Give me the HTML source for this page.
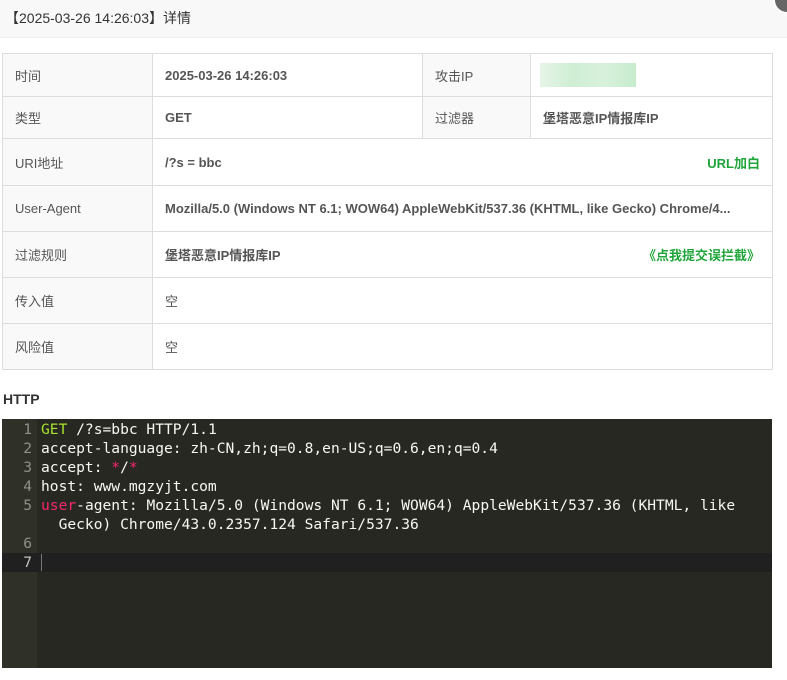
<!DOCTYPE html>
<html><head><meta charset="utf-8"><style>
*{box-sizing:border-box;margin:0;padding:0}
body{width:787px;height:680px;background:#fff;font-family:"Liberation Sans","Noto Sans CJK SC",sans-serif;position:relative;overflow:hidden;color:#333}
.hd{position:absolute;left:0;top:0;width:787px;height:38px;background:#f8f8f8;border-bottom:1px solid #eee;font-size:14px;line-height:37px;padding-left:5px;color:#333}
.x{position:absolute;left:773px;top:-14px;width:28px;height:28px;border-radius:50%;background:#666;border:2px solid #fff}
table{position:absolute;left:2px;top:53px;width:770px;border-collapse:collapse;font-size:13px;table-layout:fixed}
td{border:1px solid #ddd;padding:0 12px;color:#555;white-space:nowrap;overflow:hidden}
td.l{background:#f9f9f9;color:#555}
td.v{font-weight:bold;color:#555}
.fx{display:flex;justify-content:space-between;align-items:center}
.g{color:#20a53a;font-weight:bold}
.h{position:absolute;left:3px;top:391px;font-weight:bold;font-size:14px;color:#333}
.code{position:absolute;left:2px;top:419px;width:770px;height:249px;background:#272822;font-family:"DejaVu Sans Mono",monospace;font-size:14.6px;color:#f8f8f2}
.gut{position:absolute;left:0;top:0;width:35px;height:249px;background:#2f3129}
.ln{position:absolute;left:0;width:770px;height:19px;line-height:19px}
.ln .n{display:inline-block;width:30px;text-align:right;color:#8f908a}
.ln .t{position:absolute;left:39px;white-space:pre}
.cur{background:#202020}
.cur .n{color:#c2c2bf}
.kw{color:#a6e22e}.pk{color:#f92672}
</style></head><body>
<div class="hd">【2025-03-26 14:26:03】详情</div>
<div class="x"></div>
<table>
<colgroup><col style="width:150px"><col style="width:270px"><col style="width:108px"><col style="width:242px"></colgroup>
<tr style="height:43px"><td class="l">时间</td><td class="v">2025-03-26 14:26:03</td><td class="l">攻击IP</td><td style="padding-left:9px"><div style="width:96px;height:24px;background:linear-gradient(90deg,#e6f5e8,#cfeed4,#d8f1dc,#c6ebcc)"></div></td></tr>
<tr style="height:42px"><td class="l">类型</td><td class="v">GET</td><td class="l">过滤器</td><td class="v">堡塔恶意IP情报库IP</td></tr>
<tr style="height:47px"><td class="l">URI地址</td><td class="v" colspan="3"><div class="fx"><span>/?s = bbc</span><span class="g">URL加白</span></div></td></tr>
<tr style="height:46px"><td class="l">User-Agent</td><td class="v" colspan="3">Mozilla/5.0 (Windows NT 6.1; WOW64) AppleWebKit/537.36 (KHTML, like Gecko) Chrome/4...</td></tr>
<tr style="height:46px"><td class="l">过滤规则</td><td class="v" colspan="3"><div class="fx"><span>堡塔恶意IP情报库IP</span><span class="g">《点我提交误拦截》</span></div></td></tr>
<tr style="height:46px"><td class="l">传入值</td><td colspan="3">空</td></tr>
<tr style="height:46px"><td class="l">风险值</td><td colspan="3">空</td></tr>
</table>
<div class="h">HTTP</div>
<div class="code"><div class="gut"></div>
<div class="ln" style="top:1px"><span class="n">1</span><span class="t"><span class="kw">GET</span> /?s=bbc HTTP/1.1</span></div>
<div class="ln" style="top:20px"><span class="n">2</span><span class="t">accept-language: zh-CN,zh;q=0.8,en-US;q=0.6,en;q=0.4</span></div>
<div class="ln" style="top:39px"><span class="n">3</span><span class="t">accept: <span class="pk">*</span>/<span class="pk">*</span></span></div>
<div class="ln" style="top:58px"><span class="n">4</span><span class="t">host: www.mgzyjt.com</span></div>
<div class="ln" style="top:77px"><span class="n">5</span><span class="t"><span class="pk">user</span>-agent: Mozilla/5.0 (Windows NT 6.1; WOW64) AppleWebKit/537.36 (KHTML, like</span></div>
<div class="ln" style="top:96px"><span class="n"></span><span class="t">  Gecko) Chrome/43.0.2357.124 Safari/537.36</span></div>
<div class="ln" style="top:115px"><span class="n">6</span></div>
<div class="ln cur" style="top:134px"><span class="n">7</span><span class="t" style="border-left:1px solid #777;height:17px;top:1px"></span></div>
</div>
</body></html>
